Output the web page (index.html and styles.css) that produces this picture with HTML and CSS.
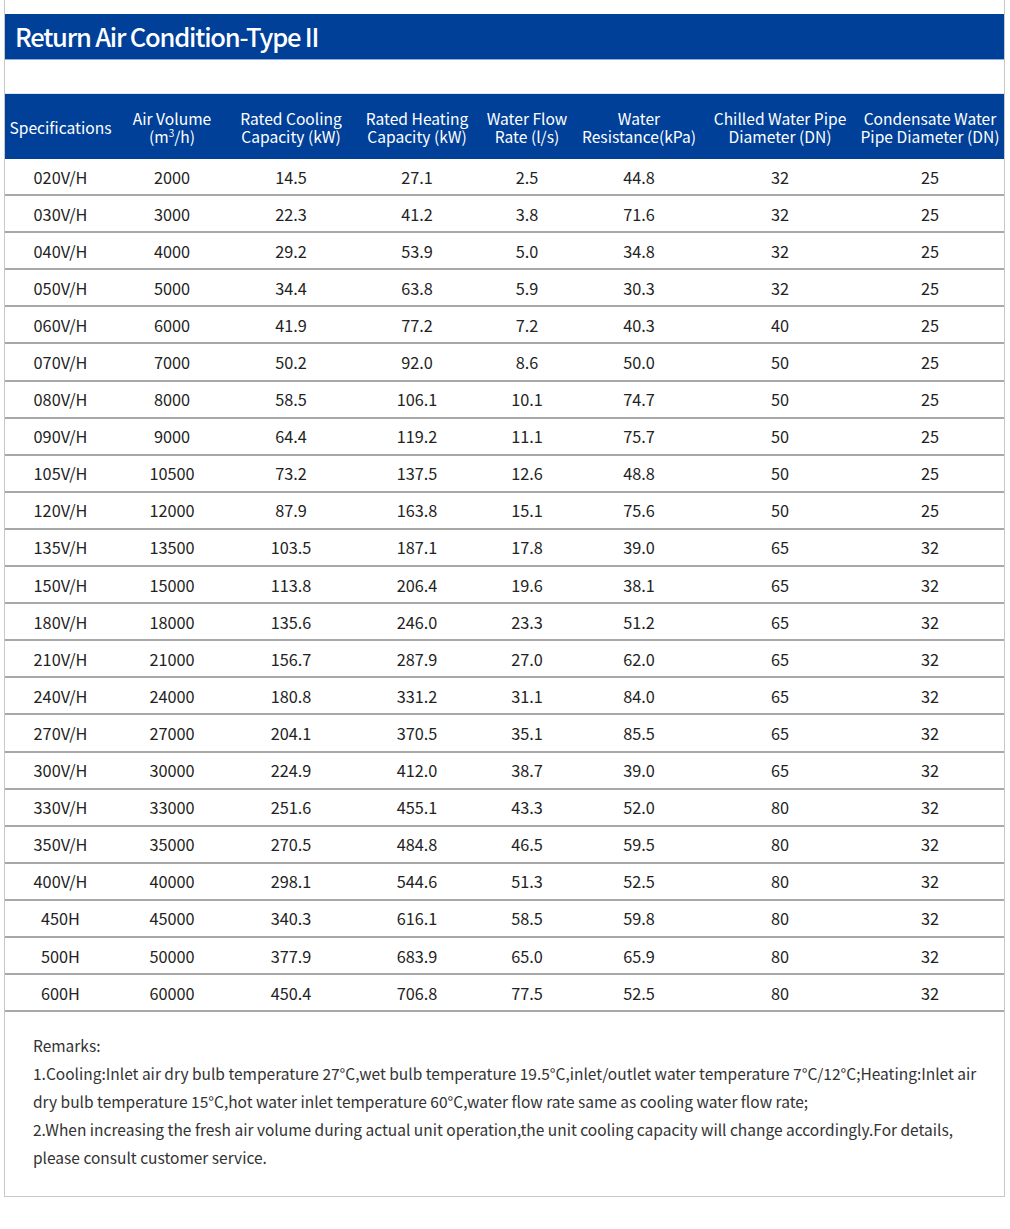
FILE: index.html
```html
<!DOCTYPE html>
<html lang="en">
<head>
    <meta charset="UTF-8">
    <meta name="viewport" content="width=device-width, initial-scale=1.0">
    <title>Return Air Condition-Type II</title>
    <link rel="stylesheet" href="styles.css">
</head>
<body>
    <div class="panel">
        <h2 class="panel-title">Return Air Condition-Type II</h2>

        <table class="spec-table">
            <thead>
                <tr>
                    <th>Specifications</th>
                    <th>Air Volume<br>(m<sup>3</sup>/h)</th>
                    <th>Rated Cooling<br>Capacity (kW)</th>
                    <th>Rated Heating<br>Capacity (kW)</th>
                    <th>Water Flow<br>Rate (l/s)</th>
                    <th>Water<br>Resistance(kPa)</th>
                    <th>Chilled Water Pipe<br>Diameter (DN)</th>
                    <th>Condensate Water<br>Pipe Diameter (DN)</th>
                </tr>
            </thead>
            <tbody>
                <tr><td>020V/H</td><td>2000</td><td>14.5</td><td>27.1</td><td>2.5</td><td>44.8</td><td>32</td><td>25</td></tr>
                <tr><td>030V/H</td><td>3000</td><td>22.3</td><td>41.2</td><td>3.8</td><td>71.6</td><td>32</td><td>25</td></tr>
                <tr><td>040V/H</td><td>4000</td><td>29.2</td><td>53.9</td><td>5.0</td><td>34.8</td><td>32</td><td>25</td></tr>
                <tr><td>050V/H</td><td>5000</td><td>34.4</td><td>63.8</td><td>5.9</td><td>30.3</td><td>32</td><td>25</td></tr>
                <tr><td>060V/H</td><td>6000</td><td>41.9</td><td>77.2</td><td>7.2</td><td>40.3</td><td>40</td><td>25</td></tr>
                <tr><td>070V/H</td><td>7000</td><td>50.2</td><td>92.0</td><td>8.6</td><td>50.0</td><td>50</td><td>25</td></tr>
                <tr><td>080V/H</td><td>8000</td><td>58.5</td><td>106.1</td><td>10.1</td><td>74.7</td><td>50</td><td>25</td></tr>
                <tr><td>090V/H</td><td>9000</td><td>64.4</td><td>119.2</td><td>11.1</td><td>75.7</td><td>50</td><td>25</td></tr>
                <tr><td>105V/H</td><td>10500</td><td>73.2</td><td>137.5</td><td>12.6</td><td>48.8</td><td>50</td><td>25</td></tr>
                <tr><td>120V/H</td><td>12000</td><td>87.9</td><td>163.8</td><td>15.1</td><td>75.6</td><td>50</td><td>25</td></tr>
                <tr><td>135V/H</td><td>13500</td><td>103.5</td><td>187.1</td><td>17.8</td><td>39.0</td><td>65</td><td>32</td></tr>
                <tr><td>150V/H</td><td>15000</td><td>113.8</td><td>206.4</td><td>19.6</td><td>38.1</td><td>65</td><td>32</td></tr>
                <tr><td>180V/H</td><td>18000</td><td>135.6</td><td>246.0</td><td>23.3</td><td>51.2</td><td>65</td><td>32</td></tr>
                <tr><td>210V/H</td><td>21000</td><td>156.7</td><td>287.9</td><td>27.0</td><td>62.0</td><td>65</td><td>32</td></tr>
                <tr><td>240V/H</td><td>24000</td><td>180.8</td><td>331.2</td><td>31.1</td><td>84.0</td><td>65</td><td>32</td></tr>
                <tr><td>270V/H</td><td>27000</td><td>204.1</td><td>370.5</td><td>35.1</td><td>85.5</td><td>65</td><td>32</td></tr>
                <tr><td>300V/H</td><td>30000</td><td>224.9</td><td>412.0</td><td>38.7</td><td>39.0</td><td>65</td><td>32</td></tr>
                <tr><td>330V/H</td><td>33000</td><td>251.6</td><td>455.1</td><td>43.3</td><td>52.0</td><td>80</td><td>32</td></tr>
                <tr><td>350V/H</td><td>35000</td><td>270.5</td><td>484.8</td><td>46.5</td><td>59.5</td><td>80</td><td>32</td></tr>
                <tr><td>400V/H</td><td>40000</td><td>298.1</td><td>544.6</td><td>51.3</td><td>52.5</td><td>80</td><td>32</td></tr>
                <tr><td>450H</td><td>45000</td><td>340.3</td><td>616.1</td><td>58.5</td><td>59.8</td><td>80</td><td>32</td></tr>
                <tr><td>500H</td><td>50000</td><td>377.9</td><td>683.9</td><td>65.0</td><td>65.9</td><td>80</td><td>32</td></tr>
                <tr><td>600H</td><td>60000</td><td>450.4</td><td>706.8</td><td>77.5</td><td>52.5</td><td>80</td><td>32</td></tr>
            </tbody>
        </table>

        <div class="remarks">
            <p>Remarks:</p>
            <p>1.Cooling:Inlet air dry bulb temperature 27°C,wet bulb temperature 19.5°C,inlet/outlet water temperature 7°C/12°C;Heating:Inlet air dry bulb temperature 15°C,hot water inlet temperature 60°C,water flow rate same as cooling water flow rate;</p>
            <p>2.When increasing the fresh air volume during actual unit operation,the unit cooling capacity will change accordingly.For details, please consult customer service.</p>
        </div>
    </div>
</body>
</html>
```

FILE: styles.css
```css
body {
    margin: 0;
    background-color: #fff;
    color: #333;
    font-family: "Noto Sans CJK SC", "Noto Sans", sans-serif;
}
.panel {
    width: 999px;
    margin: 0 4px;
    padding-top: 14px;
    border: 1px solid #c8c8c8;
    border-top: none;
}
.panel-title {
    margin: 0 0 33px;
    height: 45px;
    padding-left: 10px;
    background-color: #004098;
    border-bottom: 1px solid #8fb0dc;
    color: #fff;
    font-size: 25.5px;
    font-weight: 500;
    line-height: 43px;
    letter-spacing: -1.2px;
}
.spec-table {
    width: 999px;
    border-collapse: collapse;
    table-layout: fixed;
    border-top: 1px solid #dde5f1;
}
.spec-table th {
    height: 65px;
    padding: 0;
    background-color: #004098;
    color: #fff;
    font-size: 15.6px;
    font-weight: normal;
    line-height: 18px;
    text-align: center;
}
.spec-table th sup {
    font-size: 10px;
    line-height: 0;
}
.spec-table th:nth-child(1) { width: 111px; }
.spec-table th:nth-child(2) { width: 112px; }
.spec-table th:nth-child(3) { width: 126px; }
.spec-table th:nth-child(4) { width: 126px; }
.spec-table th:nth-child(5) { width: 94px; }
.spec-table th:nth-child(6) { width: 130px; }
.spec-table th:nth-child(7) { width: 152px; }
.spec-table th:nth-child(8) { width: 148px; }
.spec-table td {
    height: 35.1px;
    padding: 0;
    border-bottom: 2px solid #a8a8a8;
    font-size: 16.3px;
    text-align: center;
    color: #222;
}
.remarks {
    padding: 19px 16px 25px 28px;
    font-size: 15.5px;
    line-height: 28px;
    color: #333;
}
.remarks p {
    margin: 0;
}
```
